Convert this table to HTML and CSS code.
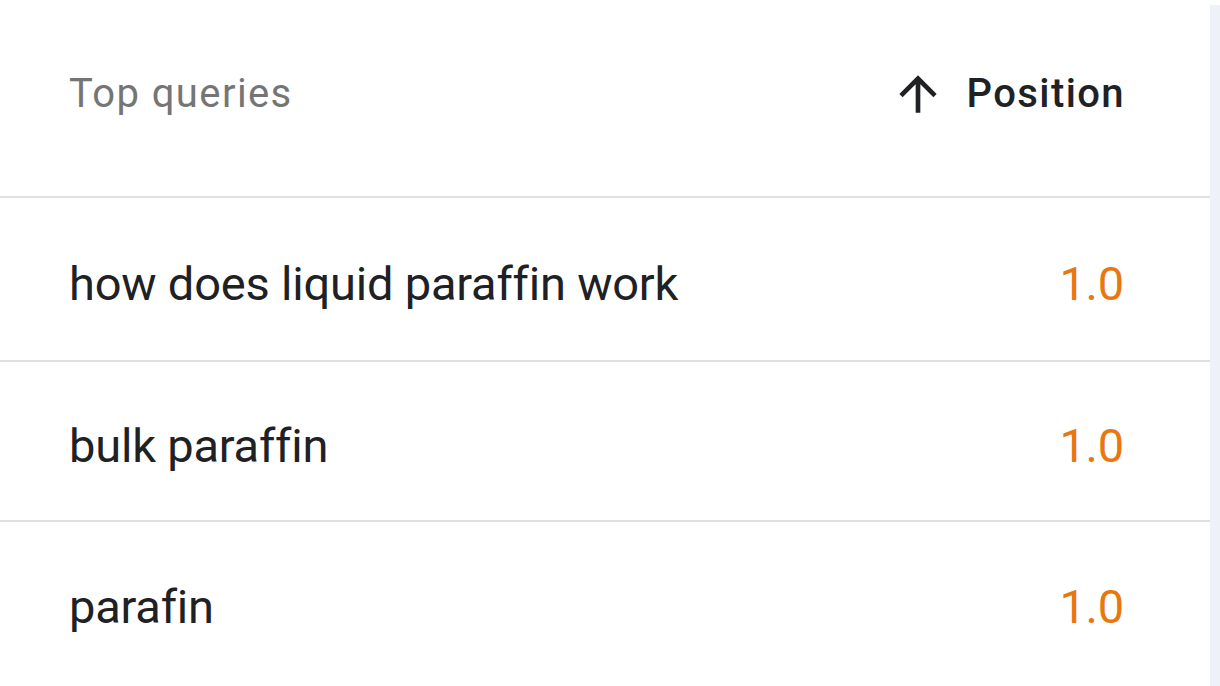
FILE: index.html
```html
<!DOCTYPE html>
<html lang="en">
<head>
    <meta charset="UTF-8">
    <title>Top queries</title>
    <link rel="stylesheet" href="styles.css">
</head>
<body>
    <div class="page">
        <div class="table">
            <div class="row head">
                <span class="col-query">Top queries</span>
                <span class="col-pos sorted">
                    <svg class="sort-icon" viewBox="0 0 24 24"><path d="M4 12l1.41 1.41L11 7.83V20h2V7.83l5.58 5.59L20 12l-8-8-8 8z"/></svg>
                    Position
                </span>
            </div>
            <div class="row r1">
                <span class="col-query">how does liquid paraffin work</span>
                <span class="col-pos">1.0</span>
            </div>
            <div class="row r2">
                <span class="col-query">bulk paraffin</span>
                <span class="col-pos">1.0</span>
            </div>
            <div class="row r3">
                <span class="col-query">parafin</span>
                <span class="col-pos">1.0</span>
            </div>
        </div>
        <div class="scroll-edge"></div>
    </div>
</body>
</html>
```

FILE: styles.css
```css
* {
    box-sizing: border-box;
    margin: 0;
    padding: 0;
}

body {
    background: #fff;
    font-family: Roboto, "Noto Sans", sans-serif;
    overflow: hidden;
}

.page {
    display: flex;
    height: 686px;
}

.table {
    width: 1210px;
    display: flex;
    flex-direction: column;
}

.row {
    display: flex;
    align-items: flex-start;
    justify-content: space-between;
    padding: 0 86px 0 69px;
    font-size: 47px;
    line-height: 56px;
    letter-spacing: -0.2px;
    color: #202124;
    border-bottom: 2px solid #e0e0e0;
}

.head {
    height: 198px;
    padding-top: 67px;
    padding-right: 85px;
    font-size: 40px;
    line-height: 54px;
    letter-spacing: 1.4px;
}

.r1 {
    height: 164px;
    padding-top: 58px;
}

.r2 {
    height: 160px;
    padding-top: 56px;
}

.r3 {
    flex: 1;
    border-bottom: none;
    padding-top: 57px;
}

.head .col-query {
    color: #757575;
}

.col-pos {
    color: #e8770f;
}

.head .col-pos {
    color: #202124;
    font-weight: 500;
    display: flex;
    align-items: flex-start;
    gap: 21px;
}

.sort-icon {
    width: 56px;
    height: 56px;
    margin-top: -1px;
    fill: #202124;
}

.scroll-edge {
    width: 10px;
    margin-top: 5px;
    background: #eef1f8;
}
```
